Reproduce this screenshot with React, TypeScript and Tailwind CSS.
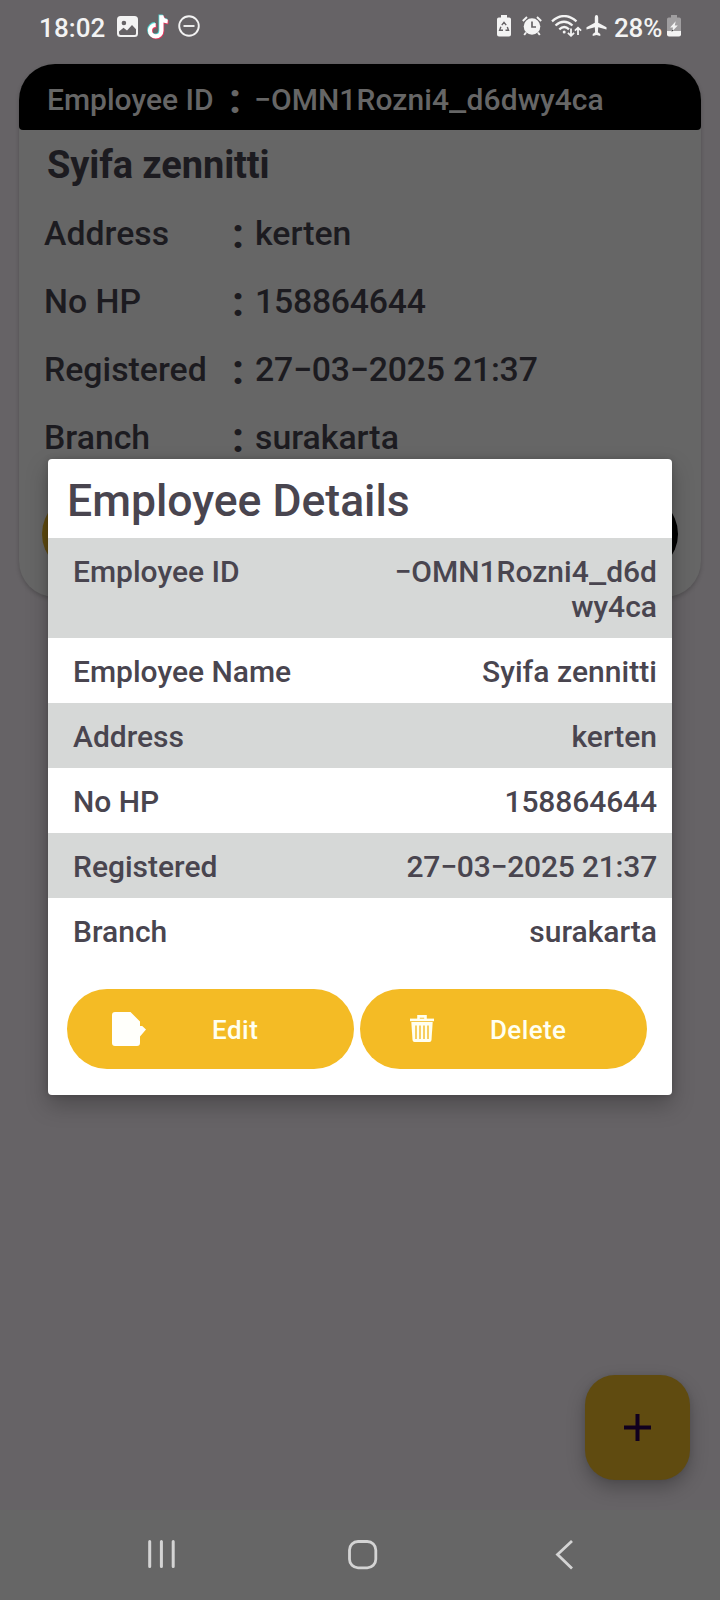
import React from "react";

const cardRows = [
  ["Address", "kerten", "tracking-normal"],
  ["No HP", "158864644", "tracking-[-0.25px]"],
  ["Registered", "27−03−2025 21:37", "tracking-[-0.2px]"],
  ["Branch", "surakarta", "tracking-normal"],
];

const detailRows = [
  ["Employee Name", "Syifa zennitti", "tracking-[0.05px]"],
  ["Address", "kerten", "tracking-normal"],
  ["No HP", "158864644", "tracking-[-0.1px]"],
  ["Registered", "27−03−2025 21:37", "tracking-[-0.2px]"],
  ["Branch", "surakarta", "tracking-normal"],
];

const note = "M15.200 1v15.500a5.700 5.700 0 1 1-5.700-5.700M15.200 1.500c.3 3.700 2.500 5.500 6.300 5.800";

function StatusBar() {
  return (
    <div className="flex h-16 items-start pt-[15px] text-[#f3f3f3]">
      <span className="ml-[39px] w-[78px] pt-px text-[26px] leading-[24px] tracking-[0.1px]">18:02</span>
      <svg className="mt-px h-[21px] w-[21px]" viewBox="0 0 21 21">
        <rect width="21" height="21" rx="3.5" fill="currentColor" />
        <circle cx="6.900" cy="7" r="2.300" fill="#666366" />
        <path d="M2 17v-1.500l4.500-3.800 3.500 2.800 5-5.500 4 4.300V17.500q0 1.500-1.500 1.500h-14Q2 19 2 17z" fill="#666366" />
      </svg>
      <svg className="-mt-[2px] ml-[8px] h-[28px] w-[24px]" viewBox="0 0 24 28" fill="none" strokeWidth="4.200">
        <path d={note} stroke="#4fd8d6" transform="translate(-.6 .4)" />
        <path d={note} stroke="#e8355c" transform="translate(1 2)" />
        <path d={note} stroke="#ffffff" transform="translate(.2 1.200)" />
      </svg>
      <svg className="ml-[8px] h-[22px] w-[22px]" viewBox="0 0 22 22" fill="none" stroke="currentColor" strokeWidth="1.9">
        <circle cx="11" cy="11" r="9.800" />
        <path d="M5.500 11h11" />
      </svg>
      <svg className="ml-auto h-[22px] w-[14px]" viewBox="0 0 14 22">
        <path d="M4 0h6v2.500h2.200q1.800 0 1.800 1.800v15.200q0 2-2 2H2q-2 0-2-2V4.300q0-1.800 1.800-1.800H4z" fill="currentColor" />
        <path d="M4.800 10.200 7 7.300l2.200 2.900M10.300 12l1.200 3.200H8.500M6 15.200H2.600l1.300-3.400" fill="none" stroke="#666366" strokeWidth="1.400" />
      </svg>
      <svg className="ml-[11px] h-[22px] w-[20px]" viewBox="0 0 20 22">
        <circle cx="10" cy="11.500" r="8.300" fill="currentColor" />
        <path d="M.8 6 5 2M19.200 6 15 2M4 17.500 2.200 20M16 17.500l1.800 2.500" stroke="currentColor" strokeWidth="1.900" />
        <path d="M10 6.500V12h4" fill="none" stroke="#666366" strokeWidth="1.700" />
      </svg>
      <svg className="ml-[9px] h-[22px] w-[31px]" viewBox="0 0 31 22" fill="none" stroke="currentColor" strokeWidth="2.300">
        <path d="M1 6.300q12-10.500 24.500 0M4.500 10.500q8.500-7.500 17 0M8.300 14.300q5-4.500 9.700 0" />
        <circle cx="13.200" cy="17" r="1.500" fill="currentColor" stroke="none" />
        <path d="M20 13.500v7M16.900 17.800l3.100 3 3.100-3M27 20v-7M23.900 15.700l3.100-3 3.100 3" strokeWidth="1.800" />
      </svg>
      <svg className="ml-[4px] h-[21px] w-[21px]" viewBox="0 0 21 21">
        <path d="M10.500 0c1.200 0 1.700 1.300 1.700 2.700v5.100l8.300 4.500v2.200l-8.300-2.200-.3 5 2.400 1.800V21l-3.800-1-3.800 1v-1.900l2.400-1.800-.3-5L.5 14.500v-2.200l8.300-4.500V2.700C8.800 1.300 9.300 0 10.500 0z" fill="currentColor" />
      </svg>
      <span className="ml-[7px] w-[50px] pt-px text-[26px] leading-[24px] tracking-[-0.2px] whitespace-nowrap">28%</span>
      <svg className="mr-[39px] ml-[3px] h-[22px] w-[14px]" viewBox="0 0 14 22">
        <path d="M4 0h6v2.500h2.200q1.800 0 1.800 1.800V16H0V4.300q0-1.800 1.800-1.800H4z" fill="#a09ea0" />
        <path d="M0 16h14v3.500q0 2-2 2H2q-2 0-2-2z" fill="currentColor" />
        <path d="m8.700 6.300-5.600 6.200h3l-1.300 4.200 6-6.300h-3z" fill="currentColor" />
        <path d="m5.300 14.500-.8 2.200 1.800-.9z" fill="#333" />
      </svg>
    </div>
  );
}

function Underscore() {
  return <span className="mx-[2px] inline-block scale-x-[1.28]">_</span>;
}

function EmployeeCard() {
  return (
    <div className="mx-[19px] flex h-[533px] flex-col rounded-[36px] bg-[#666666] shadow-[0_2px_4px_rgba(0,0,0,0.2)]">
      <div className="flex h-[66px] shrink-0 items-center rounded-t-[36px] rounded-b-[4px] bg-black text-[30px] leading-[35px] text-[#666666]">
        <span className="ml-[28px] w-[182px] pt-[5px]">Employee ID</span>
        <span className="w-[25px] pt-[2px] text-[43px] font-bold">:</span>
        <span className="pt-[5px] tracking-[0.07px]">−OMN1Rozni4<Underscore />d6dwy4ca</span>
      </div>
      <div className="ml-[28px] h-[69px] shrink-0 pt-[13px] text-[38px] leading-[44px] font-bold tracking-[-0.1px] text-[#1c1b20]">Syifa zennitti</div>
      {cardRows.map(([label, value, tracking]) => (
        <div key={label} className="flex h-[68px] shrink-0 items-center text-[33.8px] leading-[40px] text-[#1c1b20]">
          <span className="ml-[25px] w-[188px] pt-[2px]">{label}</span>
          <span className="w-[23px] text-[43px] font-bold">:</span>
          <span className={`pt-[2px] ${tracking}`}>{value}</span>
        </div>
      ))}
      <div className="mr-[23px] ml-[23px] flex h-[80px] gap-[6px] pt-[23px]">
        <div className="h-[80px] flex-1 shrink-0 rounded-full bg-[#604b10]" />
        <div className="h-[80px] flex-1 shrink-0 rounded-full bg-black" />
      </div>
    </div>
  );
}

function DetailsDialog() {
  return (
    <div className="absolute top-[459px] left-[48px] flex h-[636px] w-[624px] flex-col rounded-[4px] bg-white text-[#49454f] shadow-[0_10px_22px_rgba(0,0,0,0.25),0_0_6px_rgba(0,0,0,0.16)]">
      <h1 className="h-[79px] pt-[15px] pl-[19px] text-[44.5px] leading-[54px]">Employee Details</h1>
      <div className="flex h-[100px] justify-between bg-[#d6d8d7] pt-[16px] pr-[15px] pl-[25px] text-[30px] leading-[35px]">
        <span>Employee ID</span>
        <span className="text-right">−OMN1Rozni4<Underscore />d6d<br />wy4ca</span>
      </div>
      {detailRows.map(([label, value, tracking]) => (
        <div key={label} className="flex h-[65px] justify-between pt-[16px] pr-[15px] pl-[25px] text-[30px] leading-[35px] odd:bg-white even:bg-[#d6d8d7]">
          <span>{label}</span>
          <span className={tracking}>{value}</span>
        </div>
      ))}
      <div className="flex gap-[6px] pt-[26px] pl-[19px] text-[26px] leading-[30px] text-[#fffff0]">
        <button className="flex h-[80px] w-[287px] items-center rounded-full bg-[#f4bb25]">
          <svg className="ml-[45px] h-[34px] w-[34px]" viewBox="0 0 34 34">
            <path d="M3 0h15.500L28 9.500V14h2.200L34 17.500l-6 7V31q0 3-3 3H3q-3 0-3-3V3q0-3 3-3z" fill="#fffffb" />
          </svg>
          <span className="ml-[66px] pt-[2px] tracking-[0.5px]">Edit</span>
        </button>
        <button className="flex h-[80px] w-[287px] items-center rounded-full bg-[#f4bb25]">
          <svg className="mb-[2px] ml-[50px] h-[27px] w-[24px]" viewBox="0 0 24 27">
            <path d="M8.500 4V1.400h7V4" fill="none" stroke="currentColor" strokeWidth="2.600" />
            <path d="M0 3.600h24v2.600H0z" fill="currentColor" />
            <path d="M1.300 7h21.400l-1.200 18q-.2 2-2 2h-15q-1.800 0-2-2z" fill="currentColor" />
            <path d="M6 10.500v13.500M10 10.500v13.500M14 10.500v13.500M18 10.500v13.500" stroke="#f4bb25" strokeWidth="1.400" />
          </svg>
          <span className="ml-[56px] pt-[2px] tracking-[0.4px]">Delete</span>
        </button>
      </div>
    </div>
  );
}

export default function App() {
  return (
    <div className="relative flex h-[1600px] w-[720px] flex-col overflow-hidden bg-[#666366] font-['Roboto','Liberation_Sans',sans-serif] font-medium">
      <StatusBar />
      <EmployeeCard />
      <DetailsDialog />
      <button className="absolute top-[1375px] left-[585px] flex h-[105px] w-[105px] items-center justify-center rounded-[30px] bg-[#604b10] shadow-[0_8px_18px_rgba(0,0,0,0.25),0_0_5px_rgba(0,0,0,0.08)]">
        <svg className="h-[27px] w-[27px]" viewBox="0 0 27 27">
          <path d="M13.500 0v27M0 13.500h27" stroke="#10001f" strokeWidth="4" />
        </svg>
      </button>
      <div className="mt-auto flex h-[90px] items-start bg-[#666666] pt-[29px]">
        <svg className="ml-[147px] h-[30px] w-[29px]" viewBox="0 0 29 30" stroke="#d4d4d4" strokeWidth="3" strokeLinecap="round">
          <path d="M2.700 2.500v25M14.400 2.500v25M26.200 2.500v25" />
        </svg>
        <svg className="ml-[171px] h-[31px] w-[31px]" viewBox="0 0 31 31">
          <rect x="2.500" y="2.500" width="26.300" height="26.300" rx="8.500" fill="none" stroke="#d4d4d4" strokeWidth="2.800" />
        </svg>
        <svg className="ml-[177px] h-[32px] w-[19px]" viewBox="0 0 19 32">
          <path d="M17 2 2.500 15.500 17 29.500" fill="none" stroke="#d4d4d4" strokeWidth="2.800" />
        </svg>
      </div>
    </div>
  );
}
